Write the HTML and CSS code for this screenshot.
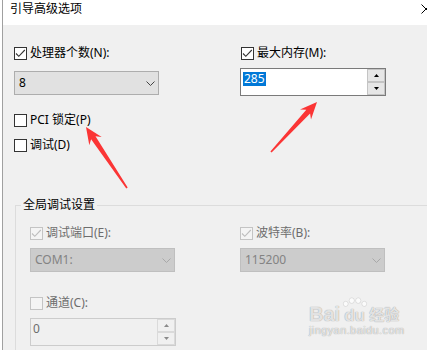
FILE: index.html
```html
<!DOCTYPE html>
<html lang="zh-CN">
<head>
<meta charset="UTF-8">
<title>引导高级选项</title>
<link rel="stylesheet" href="styles.css">
</head>
<body>
  <div class="window">
    <div class="titlebar">
      <span class="title">引导高级选项</span>
      <svg class="close" viewBox="0 0 10 10"><path d="M0.5 0.5 L9.5 9.5 M0.5 9.5 L9.5 0.5" stroke="#000" stroke-width="1" fill="none"/></svg>
    </div>

    <div class="columns top">
      <div class="col top-left">
        <label class="check">
          <span class="box"><svg viewBox="0 0 11 11"><polyline points="1,5.5 3.8,8.3 9.8,2" /></svg></span>
          处理器个数(N):
        </label>
        <div class="select">
          <span>8</span>
          <svg viewBox="0 0 9 5"><polyline points="0.5,0.5 4.5,4.5 8.5,0.5" /></svg>
        </div>
        <label class="check pci">
          <span class="box"></span>
          PCI 锁定(P)
        </label>
        <label class="check debug">
          <span class="box"></span>
          调试(D)
        </label>
      </div>
      <div class="col">
        <label class="check shifted">
          <span class="box"><svg viewBox="0 0 11 11"><polyline points="1,5.5 3.8,8.3 9.8,2" /></svg></span>
          最大内存(M):
        </label>
        <div class="spin focused">
          <span class="spin-value"><span class="sel">285</span></span>
          <span class="spin-btns">
            <span class="spin-btn"><svg viewBox="0 0 5 3"><polygon points="2.5,0 5,3 0,3" /></svg></span>
            <span class="spin-btn"><svg viewBox="0 0 5 3"><polygon points="0,0 5,0 2.5,3" /></svg></span>
          </span>
        </div>
      </div>
    </div>

    <fieldset class="group">
      <legend>全局调试设置</legend>
      <div class="columns inner">
        <div class="col group-left">
          <label class="check disabled">
            <span class="box"><svg viewBox="0 0 11 11"><polyline points="1,5.5 3.8,8.3 9.8,2" /></svg></span>
            调试端口(E):
          </label>
          <div class="select disabled">
            <span>COM1:</span>
            <svg viewBox="0 0 9 5"><polyline points="0.5,0.5 4.5,4.5 8.5,0.5" /></svg>
          </div>
          <label class="check disabled channel">
            <span class="box"></span>
            通道(C):
          </label>
          <div class="spin disabled">
            <span class="spin-value">0</span>
            <span class="spin-btns">
              <span class="spin-btn"><svg viewBox="0 0 5 3"><polygon points="2.5,0 5,3 0,3" /></svg></span>
              <span class="spin-btn"><svg viewBox="0 0 5 3"><polygon points="0,0 5,0 2.5,3" /></svg></span>
            </span>
          </div>
        </div>
        <div class="col">
          <label class="check disabled">
            <span class="box"><svg viewBox="0 0 11 11"><polyline points="1,5.5 3.8,8.3 9.8,2" /></svg></span>
            波特率(B):
          </label>
          <div class="select disabled">
            <span>115200</span>
            <svg viewBox="0 0 9 5"><polyline points="0.5,0.5 4.5,4.5 8.5,0.5" /></svg>
          </div>
        </div>
      </div>
    </fieldset>
  </div>

  <!-- annotation arrows drawn over the dialog -->
  <svg class="arrows" viewBox="0 0 427 350">
    <polygon points="86,127 101.7,136.9 95.5,136.3 127.7,187.6 126.3,188.4 91.1,139.3 89.3,145.3" />
    <polygon points="317,102 311,119.6 310.1,113.4 271.6,152.5 270.4,151.5 306.3,109.8 300,109.4" />
  </svg>

  <div class="watermark">
    <div class="wm-row">
      <span class="wm-bai">Bai</span>
      <span class="wm-du">
        <svg viewBox="0 0 28 10"><ellipse cx="4" cy="7" rx="2.6" ry="2.8"/><ellipse cx="10.5" cy="3.5" rx="2.8" ry="3"/><ellipse cx="17.5" cy="3.5" rx="2.8" ry="3"/><ellipse cx="24" cy="7" rx="2.6" ry="2.8"/></svg>
        <span>du</span>
      </span>
      <span class="wm-jy">经验</span>
    </div>
    <div class="wm-url">jingyan.baidu.com</div>
  </div>
</body>
</html>
```

FILE: styles.css
```css
body {
  margin: 0;
  width: 427px;
  height: 350px;
  overflow: hidden;
  position: relative;
  background: #fff;
  font-family: "Noto Sans", "Noto Sans CJK SC", sans-serif;
  font-size: 12px;
  line-height: 16px;
  color: #000;
}

.window {
  margin-left: 2px;
  height: 350px;
  overflow: hidden;
  border-left: 1px solid #a0a0a0;
  background: #f0f0f0;
}

.titlebar {
  height: 25px;
  box-sizing: border-box;
  padding: 1px 0 0 7px;
  background: #fff;
  display: flex;
  justify-content: space-between;
}

.close {
  width: 10px;
  height: 10px;
  margin: 3px -4px 0 0;
}

.columns {
  display: flex;
}

.col {
  display: flex;
  flex-direction: column;
  align-items: flex-start;
}

.top {
  padding: 20px 0 0 11px;
}

.top-left {
  width: 226px;
}

/* checkboxes */
.check {
  display: flex;
  align-items: center;
  gap: 3px;
}

.check.shifted {
  margin-left: 1px;
}

.box {
  width: 13px;
  height: 13px;
  box-sizing: border-box;
  border: 1px solid #333;
  background: #fff;
  display: flex;
}

.box svg {
  width: 11px;
  height: 11px;
}

.box polyline {
  fill: none;
  stroke: #333;
  stroke-width: 1.1;
}

.check.disabled {
  color: #6d6d6d;
}

.check.disabled .box {
  border-color: #c4c4c4;
  background: #f4f4f4;
}

.check.disabled .box polyline {
  stroke: #bdbdbd;
}

.pci {
  margin-top: 17px;
}

.debug {
  margin-top: 9px;
}

/* combo boxes */
.select {
  width: 145px;
  height: 24px;
  box-sizing: border-box;
  margin-top: 10px;
  padding: 0 3px 0 4px;
  border: 1px solid #adadad;
  background: #e1e1e1;
  display: flex;
  align-items: center;
  justify-content: space-between;
}

.select svg {
  width: 9px;
  height: 5px;
}

.select polyline {
  fill: none;
  stroke: #444;
  stroke-width: 1;
}

.select.disabled {
  margin-top: 7px;
  border-color: #bfbfbf;
  background: #cccccc;
  color: #838383;
}

.select.disabled polyline {
  stroke: #a8a8a8;
}

/* number boxes */
.spin {
  width: 146px;
  height: 28px;
  box-sizing: border-box;
  margin-top: 7px;
  border: 1px solid #7a7a7a;
  background: #fff;
  display: flex;
}

.spin-value {
  flex: 1;
  padding: 3px 0 0 2px;
  line-height: 14px;
}

.sel {
  display: inline-block;
  height: 14px;
  padding: 0 1px;
  background: #0078d7;
  color: #fff;
}

.spin-btns {
  width: 18px;
  display: flex;
  flex-direction: column;
}

.spin-btn {
  flex: 1;
  border: 1px solid #c4c4c4;
  background: #e6e6e6;
  display: flex;
  align-items: center;
  justify-content: center;
}

.spin-btn svg {
  width: 5px;
  height: 3px;
  fill: #000;
}

.spin.disabled {
  border-color: #cccccc;
  background: #f0f0f0;
  color: #6d6d6d;
}

.spin.disabled .spin-btn {
  border-color: #dadada;
  background: #f0f0f0;
}

.spin.disabled .spin-btn svg {
  fill: #8a8a8a;
}

/* group box */
.group {
  width: 500px;
  min-width: 0;
  margin: 44px 0 0 12px;
  padding: 0 0 30px 14px;
  border: 1px solid #dcdcdc;
}

.group legend {
  padding: 0 2px;
  margin-left: -9px;
}

.inner {
  padding-top: 12px;
}

.group-left {
  width: 210px;
}

.channel {
  margin-top: 23px;
}

/* overlays */
.arrows {
  position: absolute;
  left: 0;
  top: 0;
  width: 427px;
  height: 350px;
  fill: #fb3535;
  pointer-events: none;
}

.watermark {
  position: absolute;
  left: 309px;
  top: 296px;
  color: rgba(255, 255, 255, 0.75);
  text-shadow: 0 0 1px rgba(0, 0, 0, 0.3), 0 0 1px rgba(0, 0, 0, 0.2);
  font-family: "Liberation Sans", "Noto Sans CJK SC", sans-serif;
  font-weight: bold;
}

.wm-row {
  display: flex;
  align-items: flex-end;
  height: 28px;
}

.wm-bai {
  font-size: 20px;
  line-height: 20px;
}

.wm-du {
  display: flex;
  flex-direction: column;
  align-items: center;
  width: 29px;
  font-size: 17px;
  line-height: 17px;
}

.wm-du svg {
  width: 26px;
  height: 10px;
  fill: rgba(255, 255, 255, 0.7);
  stroke: rgba(0, 0, 0, 0.12);
  stroke-width: 0.8;
}

.wm-jy {
  font-size: 15px;
  line-height: 18px;
}

.wm-url {
  font-size: 11px;
  line-height: 13px;
  font-weight: normal;
  letter-spacing: 0.4px;
}
```
